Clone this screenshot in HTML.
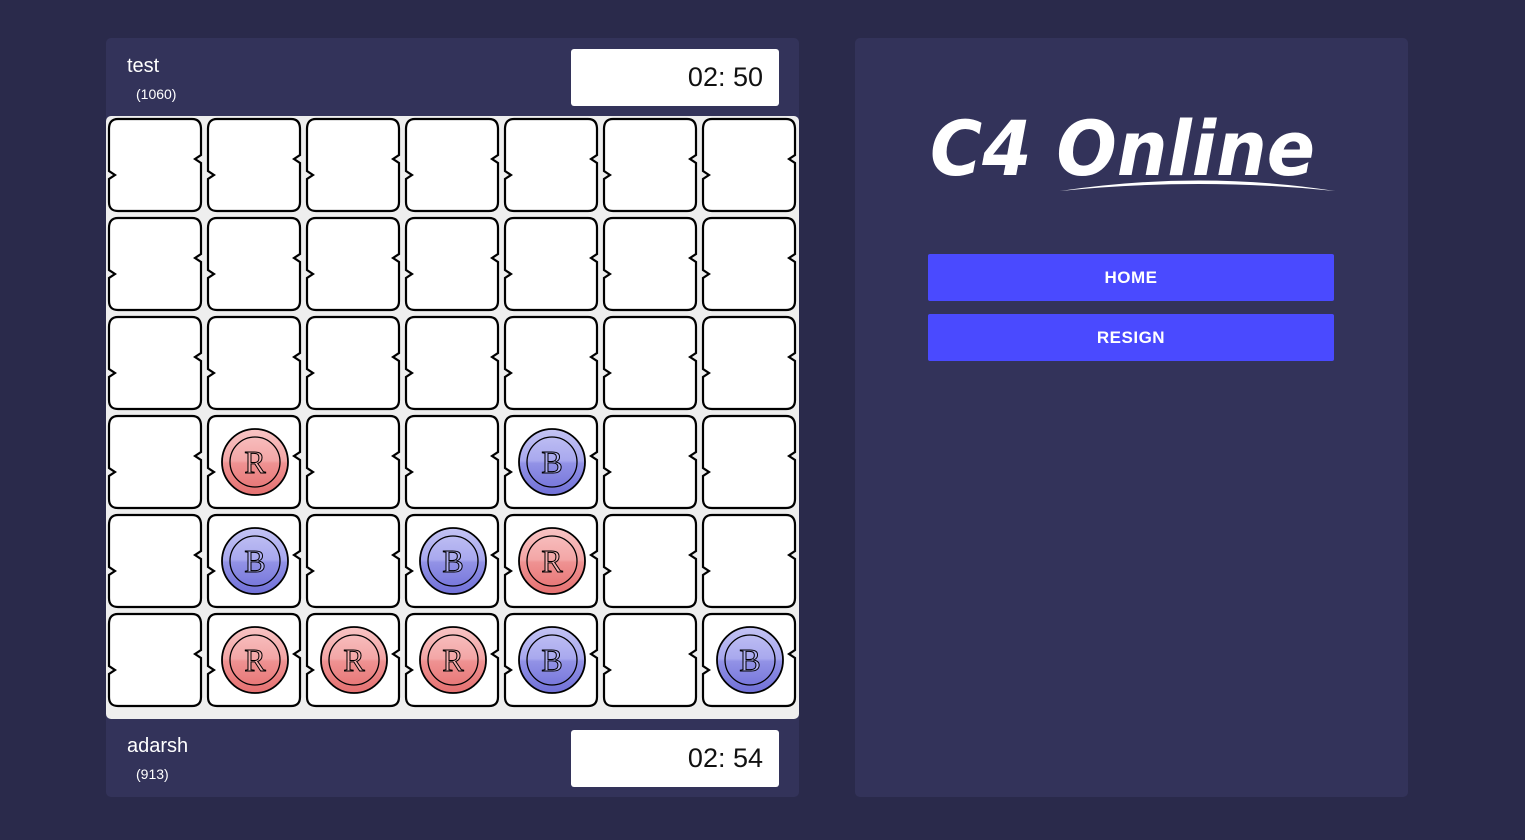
<!DOCTYPE html>
<html><head><style>
*{margin:0;padding:0;box-sizing:border-box}
body{width:1525px;height:840px;background:#2a2a4b;font-family:"Liberation Sans",sans-serif;position:relative;overflow:hidden}
.panel{position:absolute;background:#33335a;border-radius:5px}
.name{position:absolute;color:#fff;font-size:20px;font-weight:300}
.rating{position:absolute;color:#fff;font-size:14px}
.timer{position:absolute;background:#fff;border-radius:3px;width:208px;height:57px;color:#111;font-size:27px;text-align:right;padding-right:16px;line-height:57px;font-weight:300}
.btn{position:absolute;left:928px;width:406px;height:47px;background:#4a4aff;color:#fff;font-weight:bold;font-size:17px;text-align:center;line-height:48px;letter-spacing:.5px;border-radius:2px}
</style></head><body>
<div class="panel" style="left:106px;top:38px;width:693px;height:759px"></div>
<div class="name" style="left:127px;top:55px">test</div>
<div class="rating" style="left:136px;top:86px">(1060)</div>
<div class="timer" style="left:571px;top:49px">02: 50</div>
<div class="name" style="left:127px;top:735px">adarsh</div>
<div class="rating" style="left:136px;top:766px">(913)</div>
<div class="timer" style="left:571px;top:730px">02: 54</div>
<div class="panel" style="left:855px;top:38px;width:553px;height:759px"></div>
<svg style="position:absolute;left:920px;top:80px" width="430" height="130">
<text x="10" y="95" fill="#fff" font-family="DejaVu Sans, sans-serif" font-style="italic" font-weight="bold" font-size="76" textLength="385" lengthAdjust="spacingAndGlyphs">C4 Online</text>
<path d="M140,111 Q280,90 415,111 Q280,97 140,111Z" fill="#fff"/>
</svg>
<div class="btn" style="top:254px">HOME</div>
<div class="btn" style="top:314px">RESIGN</div>
<svg style="position:absolute;left:106px;top:116px" width="693" height="603" xmlns:xlink="http://www.w3.org/1999/xlink">
<defs>
<linearGradient id="rg" x1="0" y1="0" x2="0" y2="1"><stop offset="0" stop-color="#f8c4c4"/><stop offset=".48" stop-color="#f3a6a6"/><stop offset=".52" stop-color="#ef9292"/><stop offset="1" stop-color="#e57070"/></linearGradient>
<linearGradient id="bg" x1="0" y1="0" x2="0" y2="1"><stop offset="0" stop-color="#c4c4f4"/><stop offset=".48" stop-color="#a8a8ee"/><stop offset=".52" stop-color="#9292e6"/><stop offset="1" stop-color="#7070d8"/></linearGradient>
<path id="cell" d="M10,0 H84 Q93,0 93,10 V36 L87,40 L93,44 V83 Q93,92 84,92 H10 Q1,92 1,83 V60 L7,56 L1,52 V10 Q1,0 10,0 Z" fill="#fff" stroke="#000" stroke-width="2.2"/>
<g id="R"><circle r="33" fill="url(#rg)" stroke="#000" stroke-width="1.8"/><circle r="25" fill="none" stroke="#000" stroke-width="1.3"/><text y="11" text-anchor="middle" font-family="Liberation Serif,serif" font-size="32" fill="#f7b0b0" stroke="#000" stroke-width="1">R</text></g>
<g id="B"><circle r="33" fill="url(#bg)" stroke="#000" stroke-width="1.8"/><circle r="25" fill="none" stroke="#000" stroke-width="1.3"/><text y="11" text-anchor="middle" font-family="Liberation Serif,serif" font-size="32" fill="#b0b0f4" stroke="#000" stroke-width="1">B</text></g>
<g id="rowc">
<use xlink:href="#cell" x="2"/><use xlink:href="#cell" x="101"/><use xlink:href="#cell" x="200"/><use xlink:href="#cell" x="299"/><use xlink:href="#cell" x="398"/><use xlink:href="#cell" x="497"/><use xlink:href="#cell" x="596"/>
</g>
</defs>
<rect width="693" height="603" rx="5" fill="#eeeeee"/>
<use xlink:href="#rowc" y="3"/>
<use xlink:href="#rowc" y="102"/>
<use xlink:href="#rowc" y="201"/>
<use xlink:href="#rowc" y="300"/>
<use xlink:href="#rowc" y="399"/>
<use xlink:href="#rowc" y="498"/>
<use xlink:href="#R" x="149" y="346"/>
<use xlink:href="#B" x="446" y="346"/>
<use xlink:href="#B" x="149" y="445"/>
<use xlink:href="#B" x="347" y="445"/>
<use xlink:href="#R" x="446" y="445"/>
<use xlink:href="#R" x="149" y="544"/>
<use xlink:href="#R" x="248" y="544"/>
<use xlink:href="#R" x="347" y="544"/>
<use xlink:href="#B" x="446" y="544"/>
<use xlink:href="#B" x="644" y="544"/>
</svg>
</body></html>
